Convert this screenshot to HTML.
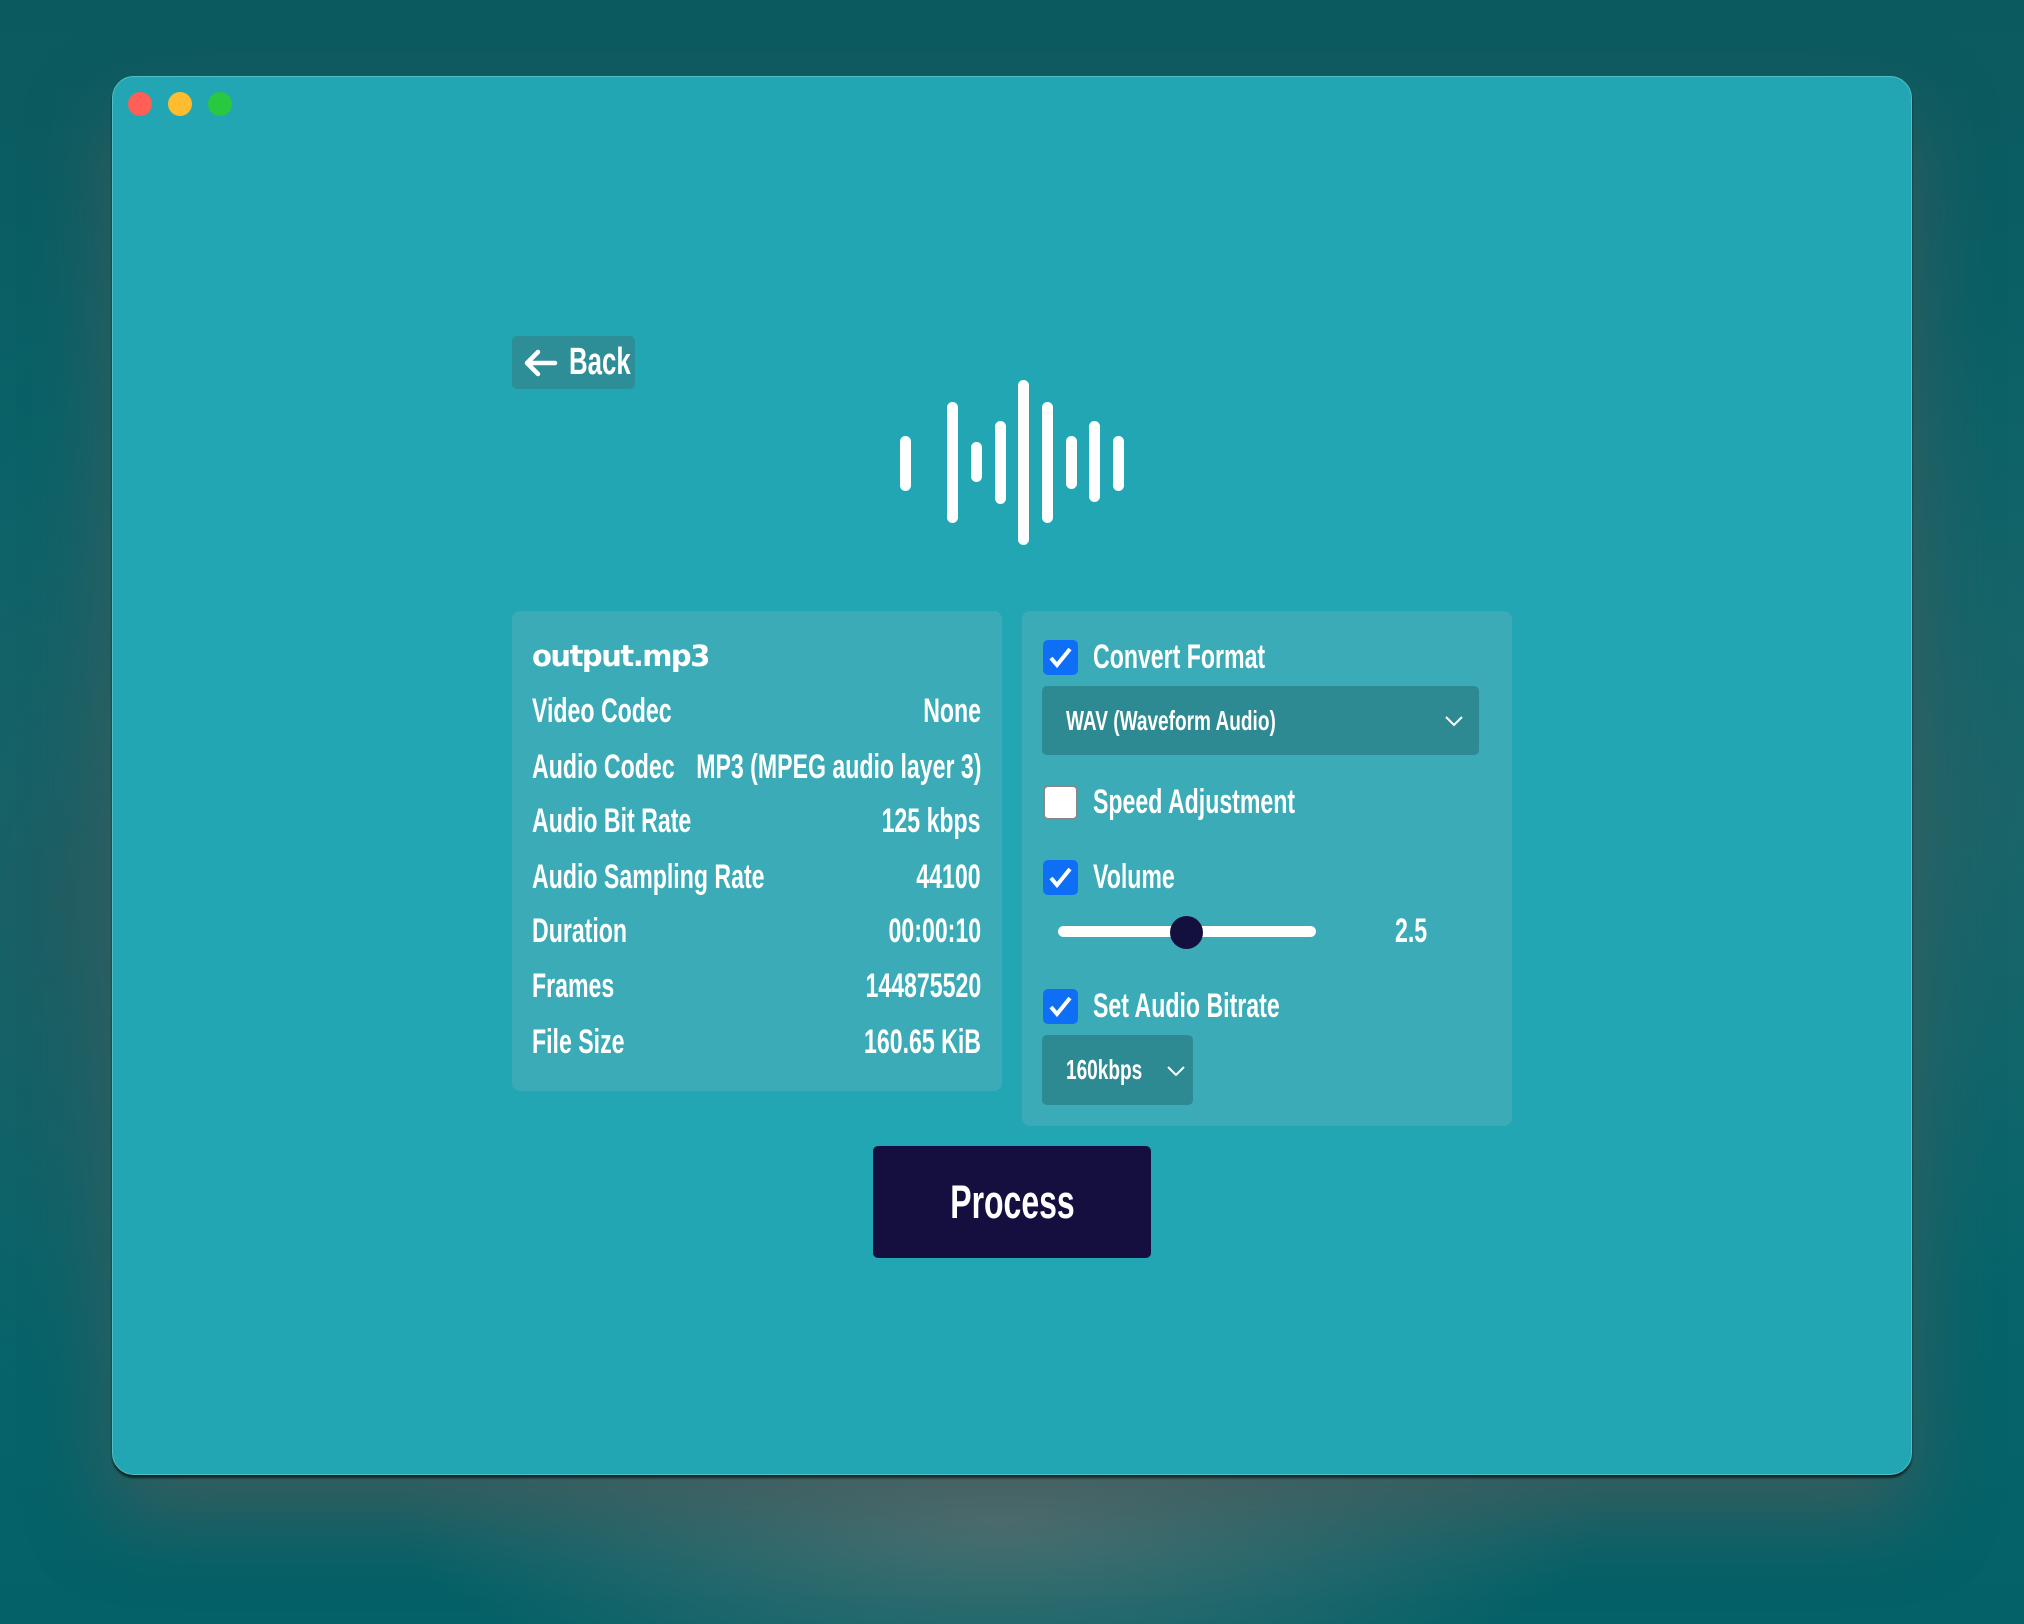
<!DOCTYPE html>
<html><head><meta charset="utf-8"><style>
*{margin:0;padding:0;box-sizing:border-box}
html,body{width:2024px;height:1624px;overflow:hidden}
body{position:relative;font-family:"Liberation Sans",sans-serif;color:#fff;
background:
radial-gradient(ellipse 800px 250px at 1000px 1520px,#4a7274 0%,rgba(0,0,0,0) 75%),
radial-gradient(ellipse 300px 700px at 60px 900px,#1d5e63 0%,rgba(0,0,0,0) 70%),
radial-gradient(ellipse 400px 700px at 1980px 800px,#1c6468 0%,rgba(0,0,0,0) 70%),
linear-gradient(180deg,#0b5a5f 0%,#08696f 50%,#046167 100%);}
.win{position:absolute;left:112px;top:76px;width:1800px;height:1399px;background:#22a6b3;border-radius:22px;border:1px solid #4fc0c8;box-shadow:0 3px 2px rgba(0,0,0,.6),0 40px 80px rgba(80,90,90,.7)}
.dot{position:absolute;top:92px;width:24px;height:24px;border-radius:50%}
.a{position:absolute;white-space:nowrap}
.n{display:inline-block;transform:scaleX(.68);transform-origin:left center;white-space:nowrap}
.nr{position:absolute;right:0;top:0;display:inline-block;transform:scaleX(.68);transform-origin:right center;white-space:nowrap}
.back{left:512px;top:336px;width:123px;height:53px;background:#2e8e98;border-radius:5px;font-size:38px;font-weight:bold;line-height:53px;padding-left:10px}
.panel{background:#3aabb7;border-radius:8px}
.row{position:absolute;left:532px;width:449px;font-size:34px;font-weight:bold;height:40px;line-height:40px;white-space:nowrap}
.cb{position:absolute;left:1043px;width:35px;height:35px;border-radius:5px;background:#0f6ef6}
.cb svg{position:absolute;left:5px;top:6px}
.lbl{position:absolute;left:1093px;font-size:34px;font-weight:bold;line-height:40px;white-space:nowrap}
.dd{position:absolute;background:#2e8a92;border-radius:5px;font-size:28px;font-weight:bold;white-space:nowrap}
.bar{position:absolute;width:11px;background:#fff;border-radius:6px}
</style></head><body>
<div class="win"></div>
<div class="dot" style="left:128px;background:#fe5f57"></div>
<div class="dot" style="left:168px;background:#febc2e"></div>
<div class="dot" style="left:208px;background:#28c840"></div>

<div class="a back"><svg width="36" height="30" viewBox="0 0 36 30" style="vertical-align:-4px"><path d="M33 15H5M16 4L5 15l11 11" stroke="#fff" stroke-width="4.5" fill="none" stroke-linecap="round" stroke-linejoin="round"/></svg> <span class="n">Back</span></div>

<div class="bar" style="left:900px;top:436px;height:55px"></div>
<div class="bar" style="left:947px;top:402px;height:121px"></div>
<div class="bar" style="left:971px;top:442px;height:40px"></div>
<div class="bar" style="left:995px;top:421px;height:83px"></div>
<div class="bar" style="left:1018px;top:380px;height:165px"></div>
<div class="bar" style="left:1042px;top:402px;height:121px"></div>
<div class="bar" style="left:1066px;top:436px;height:53px"></div>
<div class="bar" style="left:1089px;top:421px;height:81px"></div>
<div class="bar" style="left:1113px;top:436px;height:55px"></div>

<div class="a panel" style="left:512px;top:611px;width:490px;height:480px"></div>
<div class="row" style="top:636px;font-family:'DejaVu Sans','Liberation Sans',sans-serif;font-size:29px;letter-spacing:-1.5px">output.mp3</div>
<div class="row" style="top:691px"><span class="n">Video Codec</span><span class="nr">None</span></div>
<div class="row" style="top:747px"><span class="n">Audio Codec</span><span class="nr">MP3 (MPEG audio layer 3)</span></div>
<div class="row" style="top:801px"><span class="n">Audio Bit Rate</span><span class="nr">125 kbps</span></div>
<div class="row" style="top:857px"><span class="n">Audio Sampling Rate</span><span class="nr">44100</span></div>
<div class="row" style="top:911px"><span class="n">Duration</span><span class="nr">00:00:10</span></div>
<div class="row" style="top:966px"><span class="n">Frames</span><span class="nr">144875520</span></div>
<div class="row" style="top:1022px"><span class="n">File Size</span><span class="nr">160.65 KiB</span></div>

<div class="a panel" style="left:1022px;top:611px;width:490px;height:515px"></div>
<div class="cb" style="top:640px"><svg width="25" height="23" viewBox="0 0 25 23"><path d="M3 12l6 7L22 3" stroke="#fff" stroke-width="4" fill="none"/></svg></div>
<div class="lbl" style="top:637px"><span class="n">Convert Format</span></div>
<div class="dd" style="left:1042px;top:686px;width:437px;height:69px;line-height:69px;padding-left:24px"><span class="n">WAV (Waveform Audio)</span><svg width="18" height="12" viewBox="0 0 18 12" style="position:absolute;right:16px;top:29px"><path d="M1 2l8 8 8-8" stroke="#fff" stroke-width="2" fill="none"/></svg></div>
<div class="cb" style="top:785px;background:#fff;border:2px solid #888"></div>
<div class="lbl" style="top:782px"><span class="n">Speed Adjustment</span></div>
<div class="cb" style="top:860px"><svg width="25" height="23" viewBox="0 0 25 23"><path d="M3 12l6 7L22 3" stroke="#fff" stroke-width="4" fill="none"/></svg></div>
<div class="lbl" style="top:857px"><span class="n">Volume</span></div>
<div class="a" style="left:1058px;top:926px;width:258px;height:11px;background:#fff;border-radius:6px"></div>
<div class="a" style="left:1170px;top:916px;width:33px;height:33px;border-radius:50%;background:#13103d"></div>
<div class="lbl" style="left:1395px;top:911px"><span class="n">2.5</span></div>
<div class="cb" style="top:989px"><svg width="25" height="23" viewBox="0 0 25 23"><path d="M3 12l6 7L22 3" stroke="#fff" stroke-width="4" fill="none"/></svg></div>
<div class="lbl" style="top:986px"><span class="n">Set Audio Bitrate</span></div>
<div class="dd" style="left:1042px;top:1035px;width:151px;height:70px;line-height:70px;padding-left:24px"><span class="n">160kbps</span><svg width="18" height="12" viewBox="0 0 18 12" style="position:absolute;right:8px;top:30px"><path d="M1 2l8 8 8-8" stroke="#fff" stroke-width="2" fill="none"/></svg></div>

<div class="a" style="left:873px;top:1146px;width:278px;height:112px;background:#140f3f;border-radius:5px;text-align:center;line-height:112px;font-size:47px;font-weight:bold"><span class="n" style="transform-origin:center">Process</span></div>
</body></html>
